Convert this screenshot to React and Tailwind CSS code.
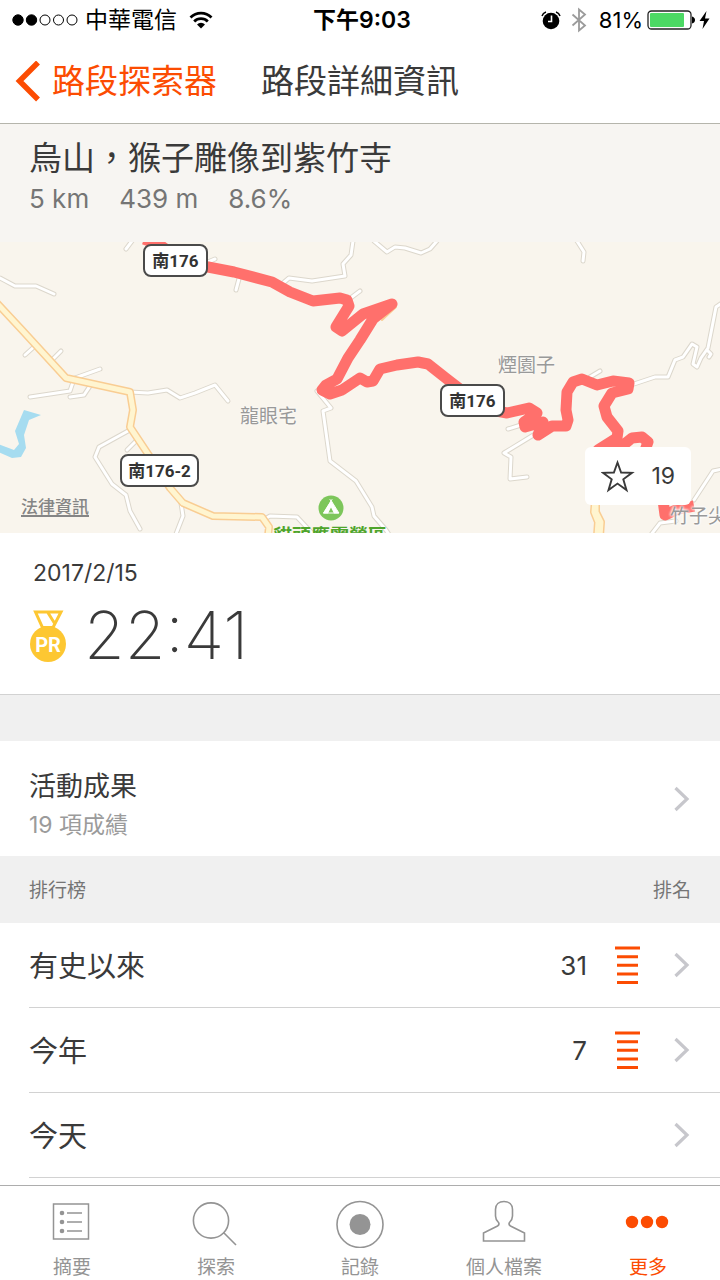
import React, { useState } from 'react';

const ROADS = [
    'M0 278 L15 286 L36 286 L54 294',
    'M132 241 L126 249',
    'M208 262 L215 259',
    'M240 275 L236 290',
    'M282 284 L289 278 L312 281 L345 276 L343 264 L351 255 L353 241',
    'M348 300 L360 291',
    'M374 241 L387 252 L395 247 L405 248 L421 253 L430 249 L437 241',
    'M577 241 L584 252 L583 261',
    'M35 346 L25 355',
    'M52 360 L61 351',
    'M75 378 L100 369',
    'M73 382 L70 391 L30 397',
    'M90 386 L84 395 L70 397',
    'M130 392 L148 393 L167 390 L180 398 L195 393 L215 385 L228 401',
    'M128 431 L99 447 L95 457 L112 484 L126 495 L130 511 L140 529',
    'M136 441 L127 450',
    'M181 503 L183 516 L176 534',
    'M263 520 L270 516 L297 517 L312 533',
    'M317 391 L331 408 L323 411 L330 461 L356 481 L372 507 L374 516 L386 530 L390 536',
    'M508 429 L521 425',
    'M540 431 L504 453 L511 457 L510 479 L527 477',
    'M590 377 L600 371',
    'M634 384 L655 377 L668 377 L675 360 L683 357 L692 344 L697 347 L693 364 L697 367 L701 358 L708 348 L716 307 L722 303',
    'M707 350 L711 354 L709 357',
    'M722 469 L713 471 L694 500',
    'M650 536 L660 523 L676 521',
];

const MAIN_ROADS = [
    'M-4 302 L22 330 L66 378 L130 392 L133 410 L130 427 L150 457 L170 488 L183 503 L213 516 L262 517 L269 527 L268 536',
    'M595 500 L594 512 L598 522 L597 536',
    'M596 500 L596 512 L601 522 L600 536',
];

const ROUTE = [
    'M144 239 L160 245 L178 258 L208 267 L234 272 L272 282 L290 292 L313 301 L340 298 L347 300 L349 306 L336 327 L342 331 L363 314 L392 304 L373 319 L360 340 L348 358 L337 379 L326 385 L322 390 L330 394 L342 390 L360 378 L367 382 L373 381 L380 369 L397 365 L418 362 L428 364 L447 379 L486 409 L507 413 L529 408 L537 413 L524 422 L525 427 L543 422 L538 435 L552 426 L566 426 L568 420 L566 410 L567 392 L573 382 L582 379 L597 385 L613 381 L629 383 L628 389 L612 393 L604 406 L607 417 L618 431 L617 438 L598 450 L622 446 L632 438 L642 437 L648 442 L643 456',
    'M663 500 L665 515 L678 509 L694 506',
];

const LEADERBOARD = [
    { id: 'all', label: '有史以來', rank: 31 },
    { id: 'year', label: '今年', rank: 7 },
    { id: 'today', label: '今天', rank: null },
];

const TABS = [
    { id: 'feed', label: '摘要', Icon: FeedIcon },
    { id: 'explore', label: '探索', Icon: SearchIcon },
    { id: 'record', label: '記錄', Icon: RecordIcon },
    { id: 'profile', label: '個人檔案', Icon: ProfileIcon },
    { id: 'more', label: '更多', Icon: MoreIcon },
];

function FeedIcon() {
    return (
        <svg width="50" height="50" viewBox="0 0 50 50" fill="none" stroke="currentColor" strokeWidth="1.5">
            <rect x="6.5" y="6" width="35" height="35" />
            <path d="M20 15h15M20 24h15M20 33h15" />
            <g fill="currentColor" stroke="none">
                <circle cx="15" cy="15" r="2.3" />
                <circle cx="15" cy="24" r="2.3" />
                <circle cx="15" cy="33" r="2.3" />
            </g>
        </svg>
    );
}

function SearchIcon() {
    return (
        <svg width="50" height="50" viewBox="0 0 50 50" fill="none" stroke="currentColor" strokeWidth="1.6">
            <circle cx="20" cy="22.5" r="17.6" />
            <path d="M32.5 34.5 45 47" />
        </svg>
    );
}

function RecordIcon() {
    return (
        <svg width="50" height="50" viewBox="0 0 50 50" fill="none" stroke="currentColor" strokeWidth="1.6">
            <circle cx="25" cy="26.5" r="23" />
            <circle cx="25" cy="26.5" r="10.5" fill="currentColor" stroke="none" />
        </svg>
    );
}

function ProfileIcon() {
    return (
        <svg width="50" height="50" viewBox="0 0 50 50" fill="none" stroke="currentColor" strokeWidth="1.6">
            <path d="M25 3.5c-5 0-8.5 3-8.5 8v6.5c0 3 1.5 5 3 6.5 1 1.5.5 2.5-1 3.5L4.500 35v8h41v-8L31.5 28c-1.5-1-2-2-1-3.500 1.500-1.500 3-3.500 3-6.500v-6.500c0-5-3.500-8-8.500-8z" />
        </svg>
    );
}

function MoreIcon() {
    return (
        <svg width="50" height="50" viewBox="0 0 50 50" fill="currentColor">
            <circle cx="9" cy="24" r="6.2" />
            <circle cx="24" cy="24" r="6.2" />
            <circle cx="39" cy="24" r="6.2" />
        </svg>
    );
}

function Chevron() {
    return (
        <svg width="18" height="28" viewBox="0 0 18 28" fill="none" stroke="#c7c7cc" strokeWidth="3.2" className="shrink-0">
            <path d="M2.500 3 14 14 2.500 25" />
        </svg>
    );
}

function RankIcon() {
    return (
        <svg width="26" height="40" viewBox="0 0 26 40" stroke="#fc4c02" strokeWidth="3" className="shrink-0">
            <path d="M0 3h25M2 11.700h21M2 20.300h21M2 29h21M2 37.500h21" />
        </svg>
    );
}

function StatusBar() {
    return (
        <div className="grid grid-cols-[1fr_auto_1fr] items-center h-10 px-3 text-black text-[23px]">
            <div className="flex items-center">
                <svg width="66" height="12" viewBox="0 0 66 12" stroke="#000">
                    <circle cx="6" cy="6" r="5.2" />
                    <circle cx="19.5" cy="6" r="5.2" />
                    <circle cx="33" cy="6" r="5" fill="none" />
                    <circle cx="46.5" cy="6" r="5" fill="none" />
                    <circle cx="60" cy="6" r="5" fill="none" />
                </svg>
                <span className="ml-[7px]">中華電信</span>
                <svg width="24" height="18" viewBox="0 0 24 18" className="ml-3" fill="none" stroke="#000" strokeWidth="2.8">
                    <path d="M1.5 6.5a15 15 0 0 1 21 0M5.2 10.4a9.6 9.6 0 0 1 13.6 0" />
                    <path d="M12 17.5 8 13.5a5.7 5.7 0 0 1 8 0z" fill="#000" stroke="none" />
                </svg>
            </div>
            <span className="pl-1 font-semibold">下午9:03</span>
            <div className="flex items-center justify-end -mr-0.5">
                <svg width="20" height="20" viewBox="0 0 20 20">
                    <circle cx="10" cy="11" r="8.3" />
                    <path d="M1 6a6 6 0 0 1 4-4M19 6a6 6 0 0 0-4-4" fill="none" stroke="#000" strokeWidth="1.5" />
                    <path d="M10.5 5.5v6H7" fill="none" stroke="#fff" strokeWidth="1.6" />
                </svg>
                <svg width="16" height="26" viewBox="0 0 16 26" className="ml-2.5" fill="none" stroke="#9b9b9b" strokeWidth="1.8">
                    <path d="M1.5 7.5 14 18.5 8 23.5V2.5l6 5L1.5 18.5" />
                </svg>
                <span className="ml-3 text-[22px]">81%</span>
                <svg width="48" height="20" viewBox="0 0 48 20" className="ml-1">
                    <rect x="1" y="1" width="43" height="18" rx="3.5" fill="#fff" stroke="#222" strokeWidth="1.3" />
                    <rect x="3" y="3" width="34" height="14" rx="1" fill="#4cd964" />
                    <path d="M45 6.5q3 1 3 3.5t-3 3.5z" />
                </svg>
                <svg width="11" height="18" viewBox="0 0 11 18" className="ml-1">
                    <path d="M7.5 0 0.5 10H5L3.5 18 10.5 7.5H6z" />
                </svg>
            </div>
        </div>
    );
}

function RoadSign({ children, className }) {
    return (
        <span className={`absolute flex items-center justify-center h-[33px] pt-0.5 rounded-lg border-2 border-[#4a4a4a] bg-white text-[#333] text-[17px] font-bold font-['Roboto','Noto_Sans_CJK_TC',sans-serif] ${className}`}>
            {children}
        </span>
    );
}

function SegmentMap() {
    const [starred, setStarred] = useState(false);

    return (
        <div className="relative h-[291px] overflow-hidden bg-[#f9f5ed]">
            <svg viewBox="0 242 720 291" preserveAspectRatio="xMidYMid slice" className="w-full h-full" fill="none" strokeLinejoin="round" strokeLinecap="round">
                <path d="M-2 444 14 450 19 444 15 431 24 410 41 415 29 420 24 435 26 448 21 457 12 458 -2 452z" fill="#a6dcf0" />
                {ROADS.map((d) => <path key={d} d={d} stroke="#dcd7cc" strokeWidth="5" />)}
                {ROADS.map((d) => <path key={d} d={d} stroke="#fff" strokeWidth="3" />)}
                {MAIN_ROADS.map((d) => <path key={d} d={d} stroke="#f9cd93" strokeWidth="8" />)}
                {MAIN_ROADS.map((d) => <path key={d} d={d} stroke="#fff5d0" strokeWidth="5" />)}
                <path d="M394 301 396 307 382 320" stroke="#f9cd93" strokeWidth="2" />
                {ROUTE.map((d) => <path key={d} d={d} stroke="#ff706c" strokeWidth="11" strokeLinecap="butt" />)}
                <circle cx="331" cy="508" r="12.5" fill="#7dc65b" />
                <path d="M330 499.5 331 501 332 499.5M331 501 323.5 513h15z" stroke="#fff" />
                <path d="M331 500.5 323 513.5h5l3-6 3 6h5z" fill="#fff" />
            </svg>
            <RoadSign className="left-[143px] top-[2px] w-[65px]">南176</RoadSign>
            <RoadSign className="left-[440px] top-[142px] w-[65px]">南176</RoadSign>
            <RoadSign className="left-[120px] top-[212px] w-[79px]">南176-2</RoadSign>
            <span className="absolute left-[498px] top-[110px] text-[19px] text-[#999] [text-shadow:0_0_3px_#fff]">煙園子</span>
            <span className="absolute left-[240px] top-[161px] text-[19px] text-[#999] [text-shadow:0_0_3px_#fff]">龍眼宅</span>
            <span className="absolute left-[670px] top-[261px] text-[19px] text-[#999] whitespace-nowrap [text-shadow:0_0_3px_#fff,0_0_3px_#fff,0_0_3px_#fff]">竹子尖</span>
            <span className="absolute left-[273px] top-[281px] text-[19px] font-bold text-[#4fa52c]">貓頭鷹露營區</span>
            <a href="#legal" className="absolute left-[21px] top-[253px] text-[17px] font-medium text-[#858585] underline underline-offset-2 decoration-2">法律資訊</a>
            <button
                type="button"
                aria-pressed={starred}
                onClick={() => setStarred(!starred)}
                className="absolute right-[29px] bottom-7 flex items-center gap-4 h-[58px] px-4 rounded-md bg-white text-[#3a3a3a] text-[23px]"
            >
                <svg width="34" height="34" viewBox="0 0 34 34" fill={starred ? '#fc4c02' : 'none'} stroke="currentColor" strokeWidth="1.9">
                    <path d="M16.500 3.500 20.100 13.500 31 13.800 22.300 20.300 25.500 31 16.500 24.600 7.500 31 10.700 20.300 2 13.800 12.900 13.500z" />
                </svg>
                19
            </button>
        </div>
    );
}

function PrMedal() {
    return (
        <svg width="36" height="54" viewBox="0 0 36 54">
            <path d="M5.500 4h25.500L23 19.500H12.500zM17.500 4 25 16" fill="none" stroke="#fdc732" strokeWidth="3" />
            <circle cx="18" cy="36" r="18" fill="#fdc732" />
            <text x="18" y="43.5" textAnchor="middle" fill="#fff" fontSize="20" fontWeight="700" fontFamily="Roboto, sans-serif">PR</text>
        </svg>
    );
}

export default function App() {
    const [tab, setTab] = useState('more');

    return (
        <div className="flex flex-col min-h-screen bg-white text-[#3a3a3a] font-['Inter','Noto_Sans_CJK_TC',sans-serif]" lang="zh-Hant">
            <header className="border-b border-[#b5b5ac]">
                <StatusBar />
                <nav className="flex items-center h-[83px] pl-[15px] text-[33px]">
                    <button type="button" className="flex items-center gap-3 text-[#fc4c02]">
                        <svg width="25" height="42" viewBox="0 0 25 42" fill="none" stroke="currentColor" strokeWidth="5.5">
                            <path d="M23 1.500 4.500 20 23 38.500" />
                        </svg>
                        路段探索器
                    </button>
                    <h1 className="ml-11">路段詳細資訊</h1>
                </nav>
            </header>

            <main className="flex-1">
                <section className="h-[118px] px-[29px] pt-3 bg-[#f7f5f2]">
                    <h2 className="text-[33px] leading-[44px]">烏山，猴子雕像到紫竹寺</h2>
                    <div className="flex gap-[30px] text-[26px] leading-[38px] text-[#757575]">
                        <span>5 km</span>
                        <span>439 m</span>
                        <span>8.6%</span>
                    </div>
                </section>

                <SegmentMap />

                <section className="h-[162px] pt-6 px-[30px] border-b border-[#d2d2d2]">
                    <p className="pl-[3px] text-[23px] leading-8">2017/2/15</p>
                    <div className="flex items-center gap-[18px] mt-2">
                        <PrMedal />
                        <span className="text-[66px] leading-[76px] font-extralight">22:41</span>
                    </div>
                </section>
                <div className="h-[46px] bg-[#f0f0f0]" />

                <button type="button" className="flex items-center justify-between w-full h-[115px] px-[29px] text-left">
                    <span className="pt-3">
                        <span className="block text-[27px] leading-10">活動成果</span>
                        <span className="block text-[23px] leading-9 text-[#9b9b9b]">19 項成績</span>
                    </span>
                    <Chevron />
                </button>

                <div className="flex items-center justify-between h-[67px] px-[29px] pt-1 bg-[#f0f0f0] text-[19px] text-[#757575]">
                    <h3>排行榜</h3>
                    <span>排名</span>
                </div>

                <ul className="pl-[29px]">
                    {LEADERBOARD.map((row) => (
                        <li key={row.id} className="border-b border-[#d2d2d2]">
                            <button type="button" className="flex items-center w-full h-[84px] pr-[29px] text-left">
                                <span className="flex-1 pt-1 text-[29px]">{row.label}</span>
                                {row.rank && (
                                    <>
                                        <span className="mr-7 text-[26px]">{row.rank}</span>
                                        <RankIcon />
                                    </>
                                )}
                                <span className="ml-8"><Chevron /></span>
                            </button>
                        </li>
                    ))}
                </ul>
            </main>

            <nav className="grid grid-cols-5 h-[95px] border-t border-[#adadad]">
                {TABS.map(({ id, label, Icon }) => (
                    <button
                        key={id}
                        type="button"
                        onClick={() => setTab(id)}
                        className={`flex flex-col items-center gap-1 pt-3 text-[19px] leading-8 ${tab === id ? 'text-[#fc4c02]' : 'text-[#949494]'}`}
                    >
                        <Icon />
                        {label}
                    </button>
                ))}
            </nav>
        </div>
    );
}
